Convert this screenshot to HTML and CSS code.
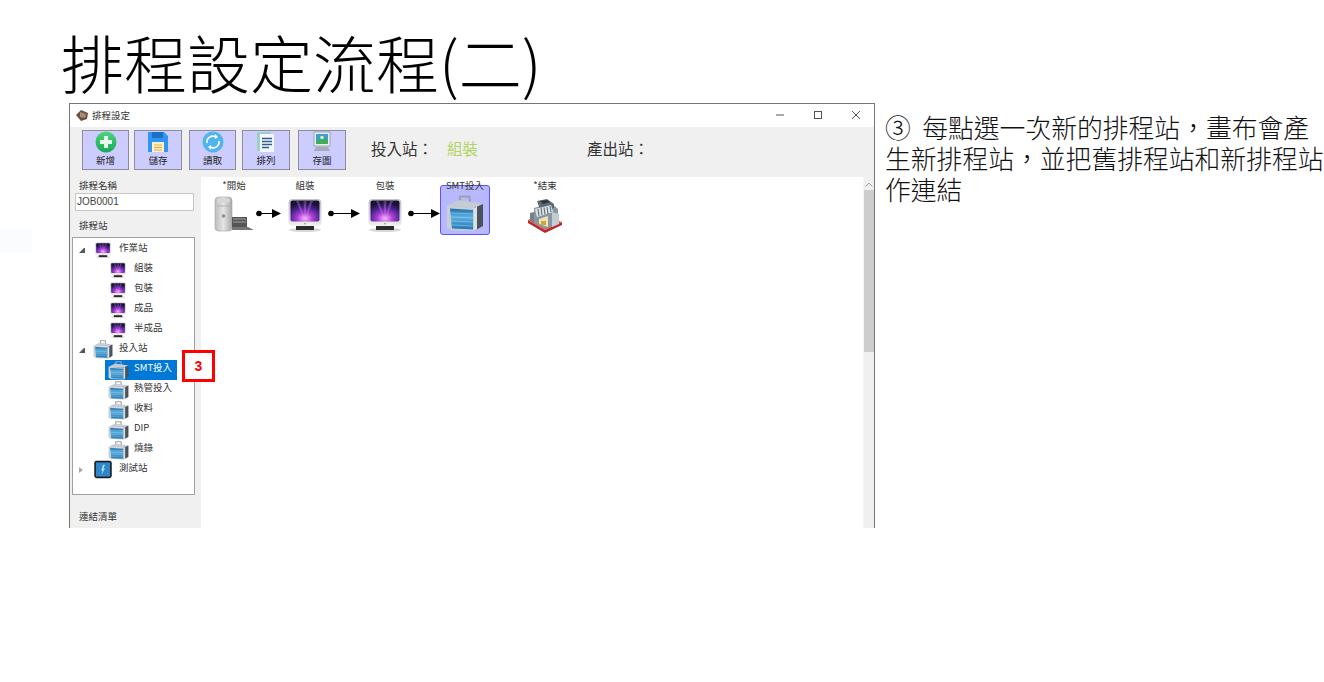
FILE: index.html
```html
<!DOCTYPE html>
<html lang="zh-Hant">
<head>
  <meta charset="UTF-8">
  <title>排程設定流程(二)</title>
  <link rel="stylesheet" href="styles.css">
</head>
<body>

<svg class="defs" width="0" height="0" aria-hidden="true">
  <defs>
    <radialGradient id="glow" cx="50%" cy="85%" r="75%">
      <stop offset="0" stop-color="#f8b8ff"/>
      <stop offset=".35" stop-color="#b040d8"/>
      <stop offset=".7" stop-color="#4a2390"/>
      <stop offset="1" stop-color="#1c1038"/>
    </radialGradient>
    <linearGradient id="silver" x1="0" y1="0" x2="0" y2="1">
      <stop offset="0" stop-color="#c4c4c4"/>
      <stop offset=".75" stop-color="#dcdcdc"/>
      <stop offset="1" stop-color="#f2f2f2"/>
    </linearGradient>
    <linearGradient id="metal" x1="0" y1="0" x2="1" y2="0">
      <stop offset="0" stop-color="#bdbdbd"/>
      <stop offset=".5" stop-color="#e4e4e4"/>
      <stop offset="1" stop-color="#a8a8a8"/>
    </linearGradient>
    <linearGradient id="caseblue" x1="0" y1="0" x2="0" y2="1">
      <stop offset="0" stop-color="#1f6ea8"/>
      <stop offset=".4" stop-color="#5cb0e2"/>
      <stop offset="1" stop-color="#2577b4"/>
    </linearGradient>
    <linearGradient id="green" x1="0" y1="0" x2="0" y2="1">
      <stop offset="0" stop-color="#4fd67f"/>
      <stop offset="1" stop-color="#17a854"/>
    </linearGradient>

    <symbol id="i-monitor" viewBox="0 0 34 34">
      <ellipse cx="17" cy="32" rx="16" ry="2" fill="#d8d8d8"/>
      <rect x=".5" y="1" width="33" height="27" rx="4" fill="url(#silver)"/>
      <rect x="2.500" y="2.500" width="29" height="21" rx="2" fill="url(#glow)"/>
      <path d="M17 23 8 3h3zM17 23 15.500 3h3zM17 23 22 3h3z" fill="#e8a8ff" opacity=".28"/>
      <rect x="8" y="28" width="18" height="4" fill="#2a2a2a"/>
      <circle cx="17" cy="25.800" r=".8" fill="#888"/>
    </symbol>

    <symbol id="i-case" viewBox="0 0 38 37" preserveAspectRatio="none">
      <path d="M14 7V1.500h9.500L24 8" fill="none" stroke="#9aa3aa" stroke-width="2"/>
      <path d="M1 11 13 5l24 4-9 4z" fill="#c6ccd1"/>
      <path d="M1 11 28 13v23L5 35 1 32z" fill="#c9d0d5"/>
      <path d="M4 13.500 27 15v19.500L6 33.500z" fill="url(#caseblue)"/>
      <path d="M5 18 27 19M5 22 27 23M5 26 27 27M6 30 27 31" stroke="#a9d8f2" stroke-width=".7" opacity=".7"/>
      <path d="M28 13l9-4v22l-9 5z" fill="#4a535b"/>
      <path d="M28 13l3-1.300v22.500l-3 1.800z" fill="#dbe0e4"/>
    </symbol>

    <symbol id="i-mac" viewBox="0 0 41 36">
      <rect x="1" y="1" width="17" height="34" rx="3.500" fill="url(#metal)" stroke="#a5a5a5" stroke-width=".6"/>
      <rect x="3" y="2.500" width="13" height="4" rx="1" fill="#d6d6d6"/>
      <path d="M3 10h13" stroke="#b0b0b0"/>
      <circle cx="9.500" cy="20" r="1.800" fill="#8f8f8f"/>
      <rect x="18" y="21" width="15" height="10" fill="#555"/>
      <path d="M19 23h13M19 26h13" stroke="#9aa7ad" stroke-width="1"/>
      <path d="M18 31h16l6 3H18z" fill="#777"/>
    </symbol>

    <symbol id="i-factory" viewBox="0 0 36 36">
      <path d="M1 25 18 35l17-8v-3L18 32 1 22z" fill="#b92a2a"/>
      <path d="M1 22 9 18l23 5 3 1-17 8z" fill="#e2504a"/>
      <path d="M7 10 24 5l7 6v15l-13 5-11-6z" fill="#8a98a3"/>
      <path d="M10 3 20 1l7 5v4L14 14z" fill="#5d6a75"/>
      <path d="M13 3 20 2l3 2-7 2z" fill="#2f3840"/>
      <path d="M8 11 24 7l2 7-16 5z" fill="#dfe5e8"/>
      <path d="M11 11l1 7M14 10l1 7M17 9.500l1 7M20 9l1 7M23 8l1 6" stroke="#66737d" stroke-width="1.200"/>
      <path d="M12 21 21 18v11l-9-3z" fill="#efe3b0"/>
      <path d="M14 23h5v4h-5z" fill="#c9a83e"/>
      <path d="M25 14l7 2v10l-7 3z" fill="#c2ccd2"/>
      <path d="M3 15 7 14v10l-4-2z" fill="#75828c"/>
    </symbol>

    <symbol id="i-test" viewBox="0 0 20 20">
      <rect x=".8" y=".8" width="18.400" height="18.400" rx="2.500" fill="#1a1a1a"/>
      <rect x="2.500" y="2.500" width="15" height="15" fill="#2f86c9"/>
      <path d="M10 5 8 11h1.500L8.500 15.500 12 9h-1.500L12 5z" fill="#9fe3ff"/>
    </symbol>
  </defs>
</svg>

<main class="slide">
  <h1 class="title">排程設定流程(二)</h1>

  <div class="content">
    <section class="window">
      <header class="titlebar">
        <svg class="app-icon" viewBox="0 0 14 12">
          <path d="M1 6 6 1l7 3-1 6-6 2z" fill="#6b5140"/>
          <path d="M5 3 11 5 10 9 5 8z" fill="#a98d72"/>
        </svg>
        <span class="titlebar-text">排程設定</span>
        <div class="controls">
          <svg viewBox="0 0 10 10"><path d="M1 5h8" stroke="#555" fill="none"/></svg>
          <svg viewBox="0 0 10 10"><rect x="1.500" y="1.500" width="7" height="7" stroke="#555" fill="none"/></svg>
          <svg viewBox="0 0 10 10"><path d="M1 1l8 8M9 1 1 9" stroke="#555" fill="none"/></svg>
        </div>
      </header>

      <div class="toolbar">
        <button class="tool tool-new">
          <svg viewBox="0 0 22 22">
            <circle cx="11" cy="11" r="10.500" fill="url(#green)"/>
            <path d="M11 5v12M5 11h12" stroke="#e9f8ee" stroke-width="4"/>
          </svg>
          新增
        </button>
        <button class="tool tool-save">
          <svg viewBox="0 0 22 22">
            <path d="M1 1h16l4 4v16H1z" fill="#2f96f3"/>
            <rect x="5" y="1" width="11" height="6" fill="#1b6fc4"/>
            <rect x="5" y="11" width="12" height="10" fill="#fdf0c4"/>
            <path d="M7 14h8M7 16.500h8M7 19h8" stroke="#f0a73c"/>
          </svg>
          儲存
        </button>
        <button class="tool tool-read">
          <svg viewBox="0 0 22 22">
            <circle cx="11" cy="11" r="10.500" fill="#4fb4f0"/>
            <path d="M5 12a6 6 0 0 1 9-6M17 10a6 6 0 0 1-9 6" fill="none" stroke="#fff" stroke-width="1.600"/>
            <path d="M13 3l3 3-3 2zM9 19l-3-3 3-2z" fill="#fff"/>
          </svg>
          讀取
        </button>
        <button class="tool tool-sort">
          <svg viewBox="0 0 22 22">
            <rect x="2" y="1" width="14" height="19" fill="#9fd0c8"/>
            <rect x="5" y="3" width="14" height="18" fill="#f5f8fa"/>
            <path d="M7 7.500h10M7 10.500h10M7 13.500h10M7 16.500h7" stroke="#2b5f8c" stroke-width="1.400"/>
          </svg>
          排列
        </button>
        <button class="tool tool-image">
          <svg viewBox="0 0 22 22">
            <rect x="3" y="1" width="16" height="14" fill="#e8eef0" stroke="#8d9aa2" stroke-width=".8"/>
            <rect x="5" y="3" width="12" height="10" fill="#3d9ddc"/>
            <path d="M5 11l3-4 3 2 3-3 3 4v3H5z" fill="#3fae5c"/>
            <circle cx="11" cy="6.500" r="1.800" fill="#e9f3a0"/>
            <path d="M5 16h12l2 4H3z" fill="#a3adb6"/>
          </svg>
          存圖
        </button>
        <div class="stations">
          <span class="station-in">投入站：</span>
          <span class="station-value">組裝</span>
          <span class="station-out">產出站：</span>
        </div>
      </div>

      <div class="workspace">
        <aside class="sidebar">
          <div class="field-label">排程名稱</div>
          <div class="job-input">JOB0001</div>
          <div class="field-label tree-label">排程站</div>
          <ul class="tree">
            <li class="tree-row top"><span class="twist open"></span><svg class="ico-top mon"><use href="#i-monitor"/></svg><span>作業站</span></li>
            <li class="tree-row leaf"><svg class="ico-leaf mon"><use href="#i-monitor"/></svg><span>組裝</span></li>
            <li class="tree-row leaf"><svg class="ico-leaf mon"><use href="#i-monitor"/></svg><span>包裝</span></li>
            <li class="tree-row leaf"><svg class="ico-leaf mon"><use href="#i-monitor"/></svg><span>成品</span></li>
            <li class="tree-row leaf"><svg class="ico-leaf mon"><use href="#i-monitor"/></svg><span>半成品</span></li>
            <li class="tree-row top"><span class="twist open"></span><svg class="ico-top"><use href="#i-case"/></svg><span>投入站</span></li>
            <li class="tree-row leaf selected"><svg class="ico-leaf"><use href="#i-case"/></svg><span>SMT投入</span></li>
            <li class="tree-row leaf"><svg class="ico-leaf"><use href="#i-case"/></svg><span>熱管投入</span></li>
            <li class="tree-row leaf"><svg class="ico-leaf"><use href="#i-case"/></svg><span>收料</span></li>
            <li class="tree-row leaf"><svg class="ico-leaf"><use href="#i-case"/></svg><span>DIP</span></li>
            <li class="tree-row leaf"><svg class="ico-leaf"><use href="#i-case"/></svg><span>燒錄</span></li>
            <li class="tree-row top"><span class="twist closed"></span><svg class="ico-top"><use href="#i-test"/></svg><span>測試站</span></li>
          </ul>
          <div class="field-label links-label">連結清單</div>
          <div class="callout">3</div>
        </aside>

        <div class="canvas">
          <div class="flow">
            <div class="node node-start">
              <span class="node-name">*開始</span>
              <svg class="node-icon mac"><use href="#i-mac"/></svg>
              <svg class="arrow arrow-short" viewBox="0 0 25 9"><circle cx="3" cy="4.500" r="2.800"/><path d="M3 4.500h14" stroke="#000"/><path d="M16 0l9 4.500-9 4.500z"/></svg>
            </div>
            <div class="node">
              <span class="node-name">組裝</span>
              <svg class="node-icon monitor"><use href="#i-monitor"/></svg>
              <svg class="arrow arrow-long" viewBox="0 0 32 9"><circle cx="3" cy="4.500" r="2.800"/><path d="M3 4.500h21" stroke="#000"/><path d="M23 0l9 4.500-9 4.500z"/></svg>
            </div>
            <div class="node">
              <span class="node-name">包裝</span>
              <svg class="node-icon monitor"><use href="#i-monitor"/></svg>
              <svg class="arrow arrow-long" viewBox="0 0 32 9"><circle cx="3" cy="4.500" r="2.800"/><path d="M3 4.500h21" stroke="#000"/><path d="M23 0l9 4.500-9 4.500z"/></svg>
            </div>
            <div class="node">
              <span class="node-name">SMT投入</span>
              <div class="node-selected"><svg class="node-icon case"><use href="#i-case"/></svg></div>
            </div>
            <div class="node">
              <span class="node-name">*結束</span>
              <svg class="node-icon factory"><use href="#i-factory"/></svg>
            </div>
          </div>
        </div>

        <div class="scrollbar">
          <svg class="scroll-up" viewBox="0 0 8 5"><path d="M.5 4.500 4 1l3.500 3.500" fill="none" stroke="#a6a6a6"/></svg>
          <div class="scroll-thumb"></div>
        </div>
      </div>
    </section>

    <p class="note">③&nbsp;&nbsp;每點選一次新的排程站，畫布會產生新排程站，並把舊排程站和新排程站作連結</p>
  </div>
</main>

<div class="ghost"></div>

</body>
</html>
```

FILE: styles.css
```css
* {
  box-sizing: border-box;
}
body {
  margin: 0;
  background: #fff;
  color: #000;
  font-family: "Noto Sans CJK TC", "Liberation Sans", sans-serif;
  overflow: hidden;
}
.defs {
  position: absolute;
}
.slide {
  width: 1324px;
  height: 682px;
}
.title {
  margin: 0;
  height: 103px;
  padding: 26px 0 0 61px;
  font-size: 63px;
  font-weight: 300;
  line-height: 70px;
  white-space: nowrap;
}
.content {
  display: flex;
  padding-left: 69px;
}
.ghost {
  position: absolute;
  left: 0;
  top: 229px;
  width: 32px;
  height: 24px;
  background: #fbfcfe;
}

/* ventana */
.window {
  width: 806px;
  height: 425px;
  border: 1px solid #767676;
  border-bottom: 0;
  background: #f0f0f0;
  display: flex;
  flex-direction: column;
  overflow: hidden;
  flex: none;
}
.titlebar {
  height: 23px;
  background: #fff;
  display: flex;
  align-items: center;
  padding: 0 0 2px 5px;
  flex: none;
}
.app-icon {
  width: 14px;
  height: 12px;
}
.titlebar-text {
  margin-left: 3px;
  font-size: 9.500px;
  color: #333;
}
.controls {
  margin-left: auto;
  display: flex;
  gap: 28px;
  padding-right: 13px;
}
.controls svg {
  width: 10px;
  height: 10px;
}

/* barra */
.toolbar {
  height: 50px;
  flex: none;
  display: flex;
  padding: 3px 0 0 12px;
  align-items: flex-start;
}
.tool {
  height: 40px;
  padding: 0;
  background: #ccccff;
  border: 1px solid #8c8c9c;
  font-family: inherit;
  font-size: 9.500px;
  line-height: 12px;
  color: #222;
  display: flex;
  flex-direction: column;
  align-items: center;
  gap: 1px;
}
.tool svg {
  width: 22px;
  height: 22px;
  flex: none;
}
.tool-new {
  width: 47px;
}
.tool-save {
  width: 48px;
  margin-left: 5px;
}
.tool-read {
  width: 47px;
  margin-left: 7px;
}
.tool-sort {
  width: 48px;
  margin-left: 6px;
}
.tool-image {
  width: 48px;
  margin-left: 8px;
}
.stations {
  margin-left: 25px;
  height: 36px;
  display: flex;
  align-items: center;
  font-size: 15.500px;
  color: #333;
}
.station-value {
  margin-left: 14px;
  color: #b3d465;
}
.station-out {
  margin-left: 109px;
}

/* lateral */
.workspace {
  flex: 1;
  display: flex;
  min-height: 0;
}
.sidebar {
  width: 131px;
  flex: none;
  position: relative;
  padding: 2px 0 0 2px;
  font-size: 9.500px;
  color: #333;
}
.field-label {
  padding-left: 7px;
  height: 14px;
  line-height: 12px;
}
.job-input {
  width: 119px;
  height: 18px;
  margin-left: 3px;
  border: 1px solid #c8c8c8;
  background: #fff;
  padding: 1px 0 0 1px;
  font-family: "Liberation Sans", sans-serif;
  font-size: 10px;
  line-height: 14px;
  color: #444;
}
.tree-label {
  margin-top: 8px;
}
.tree {
  list-style: none;
  margin: 4px 0 0;
  padding: 2px 0 0;
  width: 123px;
  height: 258px;
  background: #fff;
  border: 1px solid #a0a0a0;
}
.tree-row {
  height: 20px;
  display: flex;
  align-items: flex-start;
  line-height: 14px;
  white-space: nowrap;
}
.tree-row svg {
  flex: none;
}
.top {
  padding-left: 6px;
}
.twist {
  width: 6px;
  height: 6px;
  margin-top: 7px;
  flex: none;
}
.twist.open {
  border-style: solid;
  border-width: 0 0 5px 5px;
  border-color: transparent transparent #555 transparent;
}
.twist.closed {
  border-style: solid;
  border-width: 3px 0 3px 4px;
  border-color: transparent transparent transparent #a8a8a8;
}
.ico-top {
  width: 20px;
  height: 19px;
  margin-left: 8px;
  margin-right: 6px;
}
.ico-top.mon {
  width: 16px;
  height: 16px;
  margin: 2px 8px 0 10px;
}
.leaf {
  width: 72px;
  margin-left: 32px;
  padding-left: 2px;
}
.ico-leaf {
  width: 21px;
  height: 19px;
  margin: 1px 5px 0 1px;
}
.ico-leaf.mon {
  width: 16px;
  height: 16px;
  margin: 2px 8px 0 3px;
}
.selected {
  background: #0078d7;
  color: #fff;
}
.links-label {
  margin-top: 15px;
}
.callout {
  position: absolute;
  left: 112px;
  top: 173px;
  width: 33px;
  height: 32px;
  background: #fff;
  border: 3px solid #f00;
  color: #f00;
  font-family: "Liberation Sans", sans-serif;
  font-weight: bold;
  font-size: 14px;
  line-height: 26px;
  text-align: center;
}

/* lienzo */
.canvas {
  width: 662px;
  flex: none;
  background: #fff;
  padding-top: 2px;
}
.flow {
  display: flex;
  padding-left: 2px;
}
.node {
  width: 80px;
  flex: none;
  position: relative;
  display: flex;
  flex-direction: column;
  align-items: center;
  height: 60px;
}
.node-start {
  width: 62px;
}
.node-name {
  font-size: 9.500px;
  line-height: 12px;
  color: #333;
  white-space: nowrap;
  position: relative;
  z-index: 1;
}
.node-icon {
  display: block;
  flex: none;
}
.mac {
  width: 41px;
  height: 36px;
  margin-top: 5px;
}
.monitor {
  width: 34px;
  height: 34px;
  margin-top: 7px;
}
.factory {
  width: 36px;
  height: 36px;
  margin-top: 7px;
}
.node-selected {
  margin-top: -6px;
  width: 50px;
  height: 50px;
  background: #b8b8ff;
  border: 1px solid #5555ff;
  border-radius: 3px;
  display: flex;
  align-items: center;
  justify-content: center;
}
.case {
  width: 38px;
  height: 37px;
  margin-top: 7px;
}
.arrow {
  position: absolute;
  top: 30px;
  height: 9px;
}
.arrow-short {
  width: 25px;
  right: -16px;
}
.arrow-long {
  width: 32px;
  right: -15px;
}

/* scroll */
.scrollbar {
  flex: 1;
  background: #f0f0f0;
  border-left: 1px solid #f6f6f6;
}
.scroll-up {
  display: block;
  width: 8px;
  height: 5px;
  margin: 5px auto 3px;
}
.scroll-thumb {
  height: 162px;
  background: #cdcdcd;
}

/* nota */
.note {
  margin: 8px 0 0 10px;
  width: 440px;
  font-size: 25.800px;
  font-weight: 300;
  line-height: 31px;
  color: #111;
}
```
